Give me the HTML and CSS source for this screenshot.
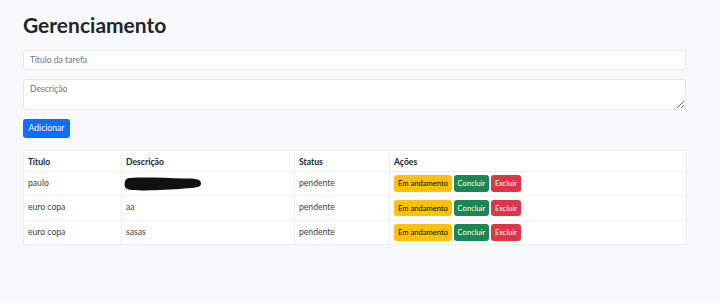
FILE: index.html
```html
<!DOCTYPE html>
<html lang="pt-BR">
<head>
<meta charset="utf-8">
<title>Gerenciamento</title>
<link rel="stylesheet" href="styles.css">
</head>
<body>
<main class="container">
  <h1 class="title">Gerenciamento</h1>
  <form class="task-form">
    <input class="field" type="text" placeholder="Título da tarefa">
    <textarea class="field area" placeholder="Descrição"></textarea>
    <div><button type="button" class="btn btn-primary">Adicionar</button></div>
  </form>
  <table class="tasks">
    <colgroup>
      <col class="c1"><col class="c2"><col class="c3"><col class="c4">
    </colgroup>
    <thead>
      <tr><th>Título</th><th>Descrição</th><th>Status</th><th>Ações</th></tr>
    </thead>
    <tbody>
      <tr>
        <td>paulo</td>
        <td><svg class="scribble" width="80" height="18" viewBox="0 0 80 18"><path d="M6 3 C20 2 40 3 60 3.5 C70 3.6 77 3.5 77 8.5 C77 13 71 12.5 60 13.5 C44 15 22 16 8 15 C2 14.6 0 12 0.6 8.5 C1 4.5 3 3.1 6 3 Z" fill="#111"/></svg></td>
        <td>pendente</td>
        <td><div class="actions"><button class="btn btn-warning">Em andamento</button><button class="btn btn-success">Concluir</button><button class="btn btn-danger">Excluir</button></div></td>
      </tr>
      <tr>
        <td>euro copa</td>
        <td>aa</td>
        <td>pendente</td>
        <td><div class="actions"><button class="btn btn-warning">Em andamento</button><button class="btn btn-success">Concluir</button><button class="btn btn-danger">Excluir</button></div></td>
      </tr>
      <tr>
        <td>euro copa</td>
        <td>sasas</td>
        <td>pendente</td>
        <td><div class="actions"><button class="btn btn-warning">Em andamento</button><button class="btn btn-success">Concluir</button><button class="btn btn-danger">Excluir</button></div></td>
      </tr>
    </tbody>
  </table>
</main>
</body>
</html>
```

FILE: styles.css
```css
* { box-sizing: border-box; }
html, body { margin: 0; padding: 0; }
body {
  background: #f8f9fa;
  font-family: Lato, "Open Sans", sans-serif;
  font-size: 8.6px;
  color: #212529;
}
.container {
  width: 720px;
  padding: 12px 34px 0 23px;
}
.title {
  font-size: 21px;
  font-weight: 700;
  line-height: 25px;
  margin: 0 0 13px 0;
  color: #212529;
}
.task-form {
  display: flex;
  flex-direction: column;
  gap: 8.5px;
}
.field {
  display: block;
  width: 663px;
  height: 20px;
  border: 1px solid #e3e6ea;
  border-radius: 3px;
  background: #fff;
  padding: 2px 6px;
  font-family: inherit;
  font-size: 8.6px;
  color: #212529;
  outline: none;
}
.field::placeholder { color: #6c757d; }
.area {
  height: 31px;
  padding-top: 4px;
  resize: vertical;
}
.btn {
  font-family: inherit;
  border: 1px solid transparent;
  border-radius: 3px;
  cursor: pointer;
  padding: 0;
}
.btn-primary {
  background: #0d6efd;
  color: #fff;
  font-size: 8.6px;
  height: 19.5px;
  width: 47px;
  margin-top: 0.5px;
}
.tasks {
  margin-top: 12px;
  width: 663px;
  border-collapse: collapse;
  background: #fff;
  border: 1px solid #e6e8eb;
  table-layout: fixed;
}
.c1 { width: 98px; }
.c2 { width: 173px; }
.c3 { width: 95px; }
.c4 { width: 297px; }
.tasks th, .tasks td {
  border: 1px solid #eceef0;
  text-align: left;
  vertical-align: top;
  padding: 4px 4px 0 4px;
  line-height: 12px;
}
.tasks th {
  font-weight: 700;
  height: 20.5px;
  padding-top: 4.5px;
}
.tasks td {
  height: 24.5px;
  color: #3a3f44;
  padding-top: 5px;
}
.tasks td:last-child { padding-top: 3.5px; }
.scribble { display: block; margin: -2px 0 0 -2px; }
.actions { display: flex; gap: 2px; }
.actions .btn {
  height: 16.5px;
  font-size: 7.6px;
  line-height: 14px;
}
.btn-warning { background: #ffc107; color: #000; width: 58px; }
.btn-success { background: #198754; color: #fff; width: 35px; }
.btn-danger { background: #dc3545; color: #fff; width: 30px; }
```
